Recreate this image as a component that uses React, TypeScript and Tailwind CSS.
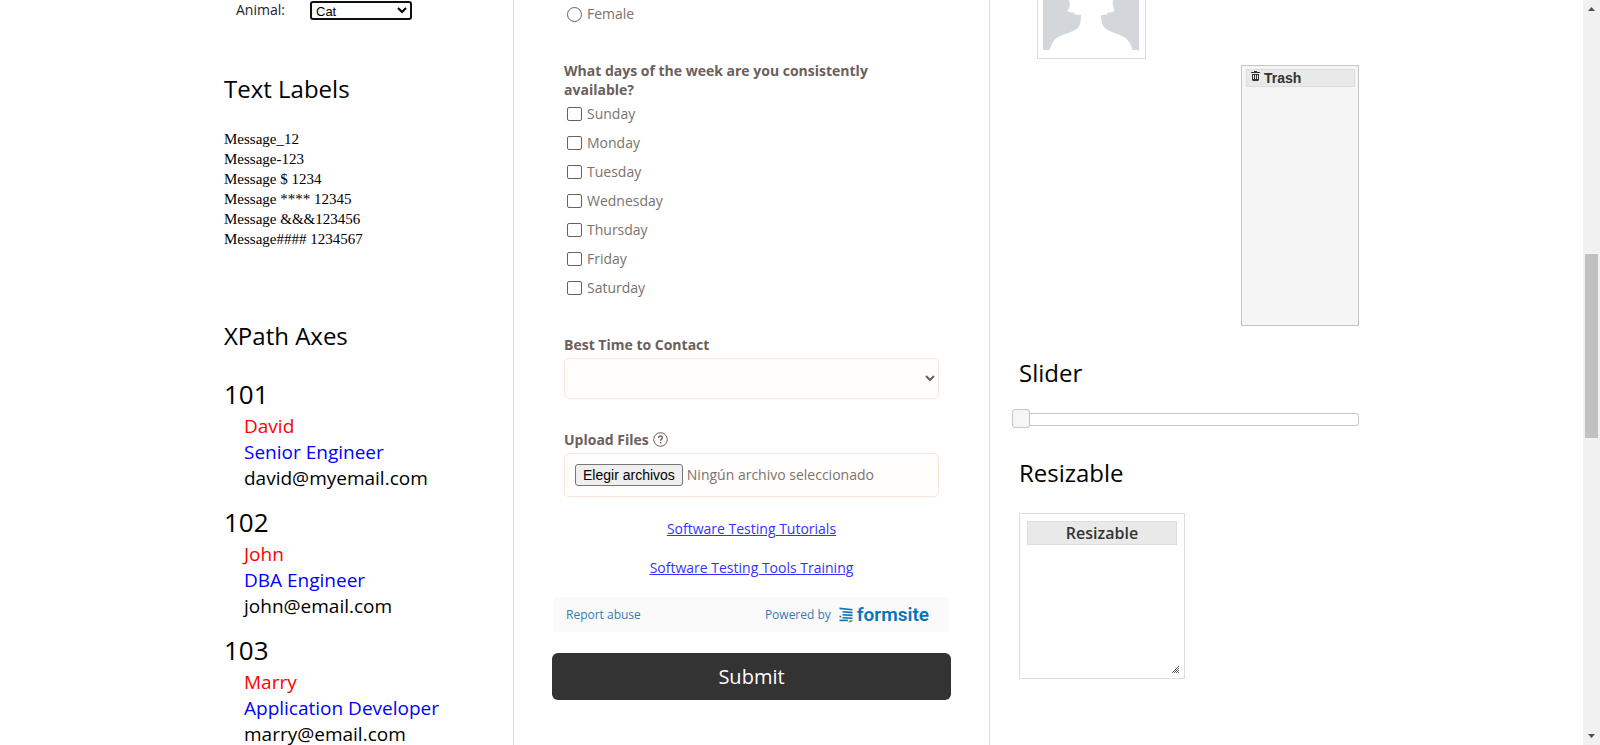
import React from "react";

const days = ["Sunday", "Monday", "Tuesday", "Wednesday", "Thursday", "Friday", "Saturday"];

const messages = [
  "Message_12",
  "Message-123",
  "Message $ 1234",
  "Message **** 12345",
  "Message &&&123456",
  "Message#### 1234567",
];

const employees = [
  { id: "101", name: "David", role: "Senior Engineer", email: "david@myemail.com" },
  { id: "102", name: "John", role: "DBA Engineer", email: "john@email.com" },
  { id: "103", name: "Marry", role: "Application Developer", email: "marry@email.com" },
];

function Heading({ children }: { children: React.ReactNode }) {
  return <h2 className="text-2xl font-normal text-black">{children}</h2>;
}

function LeftColumn() {
  return (
    <aside className="w-[289px] shrink-0 text-black">
      <div className="flex h-5 items-center pl-3 text-sm leading-5">
        <label htmlFor="animal" className="w-[74px] text-[#222]">
          Animal:
        </label>
        <select
          id="animal"
          className="h-[19px] w-[102px] rounded-[3px] border-2 border-[#101010] bg-white pb-px font-['Liberation_Sans',sans-serif] text-[13px] leading-[14px] text-black"
        >
          <option>Cat</option>
          <option>Dog</option>
        </select>
      </div>

      <div className="mt-[53px]">
        <Heading>Text Labels</Heading>
      </div>
      <div className="mt-6 font-['Liberation_Serif',serif] text-[15px] leading-5">
        {messages.map((m) => (
          <p key={m}>{m}</p>
        ))}
      </div>

      <div className="mt-[71px]">
        <Heading>XPath Axes</Heading>
      </div>
      <div className="mt-[25px] flex flex-col gap-[14px]">
        {employees.map((e) => (
          <div key={e.id} className="flex flex-col gap-[2px]">
            <h3 className="text-[26px] leading-[34px]">{e.id}</h3>
            <div className="pl-5 text-[19px] leading-[26px]">
              <p className="text-[#f00]">{e.name}</p>
              <p className="text-[#00f]">{e.role}</p>
              <p>{e.email}</p>
            </div>
          </div>
        ))}
      </div>
    </aside>
  );
}

function FormsiteLogo() {
  return (
    <span className="flex items-center gap-1">
      <svg width="14" height="16" viewBox="0 0 14 16" aria-hidden="true">
        <g stroke="#0a72b9" strokeWidth="1.6" fill="none">
          <path d="M0.5 1.4 L13.5 2.8" />
          <path d="M3.5 4.8 L13.5 5.6" />
          <path d="M3.5 7.8 L13.5 8.4" />
          <path d="M3.5 10.8 L13.5 11.2" />
          <path d="M0.5 13.4 H9" />
          <path d="M0.5 9.6 H2.2" />
        </g>
        <path d="M10 13.4 L13.600 13 L13 15 L9.6 15.4 Z" fill="#4fae5b" />
      </svg>
      <span className="font-['Roboto',sans-serif] text-[19px] leading-5 font-semibold text-[#0a72b9]">formsite</span>
    </span>
  );
}

function FormColumn() {
  return (
    <main className="min-w-0 flex-1 border-x border-[#ddd] px-[38px] text-sm text-[#7b726c]">
      <form onSubmit={(e) => e.preventDefault()}>
        <div className="px-3">
          <label className="flex h-7 items-center gap-[5px] pl-[3px]">
            <input
              type="radio"
              name="gender"
              className="size-[15px] appearance-none rounded-full border border-[#6b605a] checked:bg-[#6b605a]"
            />
            Female
          </label>

          <fieldset className="mt-[33px]">
            <legend className="leading-[19px] font-bold text-[#6b605a]">
              What days of the week are you consistently available?
            </legend>
            {days.map((day) => (
              <label key={day} className="flex h-[29px] items-center gap-[5px] pl-[3px]">
                <input
                  type="checkbox"
                  className="h-[14px] w-[15px] appearance-none rounded-[2px] border border-[#6b605a] checked:bg-[#6b605a]"
                />
                {day}
              </label>
            ))}
          </fieldset>

          <label htmlFor="contact-time" className="mt-[33px] block leading-[19px] font-bold text-[#6b605a]">
            Best Time to Contact
          </label>
          <select
            id="contact-time"
            className="mt-1 block h-[41px] w-full rounded-[5px] border border-[#f9e6da] bg-[#fffefc] text-[#6b605a]"
          >
            <option></option>
            <option>Morning</option>
            <option>Afternoon</option>
          </select>

          <div className="mt-[31px] flex items-center gap-1 leading-[19px] font-bold text-[#6b605a]">
            <span id="upload-label">Upload Files</span>
            <svg width="15" height="15" viewBox="0 0 15 15" fill="none" stroke="#6b605a" aria-hidden="true">
              <circle cx="7.5" cy="7.5" r="6.8" strokeWidth="1" />
              <path d="M5.6 5.9 C5.6 3.4 9.5 3.5 9.4 5.8 C9.3 7.2 7.5 7.1 7.5 8.8" strokeWidth="1.4" />
              <path d="M7.5 10 V11.4" strokeWidth="1.5" />
            </svg>
          </div>
          <div className="mt-1 flex h-11 items-center gap-1 rounded-[5px] border border-[#f9e6da] bg-[#fffefc] px-[10px]">
            <input id="files" type="file" multiple className="sr-only" aria-labelledby="upload-label" />
            <label
              htmlFor="files"
              className="rounded-[3px] border border-[#767676] bg-[#efefef] px-[7px] font-['Liberation_Sans',sans-serif] leading-5 text-black"
            >
              Elegir archivos
            </label>
            <span>Ningún archivo seleccionado</span>
          </div>

          <div className="mt-[22px] flex flex-col items-center gap-5 leading-[19px] text-[#3333ff] underline">
            <a href="#tutorials">Software Testing Tutorials</a>
            <a href="#training">Software Testing Tools Training</a>
          </div>
        </div>

        <div className="mx-[2px] mt-5 flex h-[35px] items-center justify-between bg-[#fafafa] pr-5 pl-3 text-xs text-[#337ab7]">
          <a href="#report">Report abuse</a>
          <a href="#formsite" className="flex items-center gap-2">
            Powered by
            <FormsiteLogo />
          </a>
        </div>

        <button type="submit" className="mt-[21px] h-[47px] w-full rounded-md bg-[#333] text-xl text-white">
          Submit
        </button>
      </form>
    </main>
  );
}

function Avatar() {
  return (
    <div className="ml-[18px] flex h-[59px] w-[109px] border border-t-0 border-[#ddd] bg-white pl-[5px]">
      <svg width="96" height="50" viewBox="0 0 96 50" fill="#d3d6db" role="img" aria-label="Profile picture">
        <path d="M0 0 H26 C26.500 3 27.500 5 26.500 7 L24.500 10.500 L26 12 L32 13 L31.500 14.500 L38 15 C38 21 37.500 26 33.500 29 C28 33 19 34 13.500 38 C10 41 8 45 6.500 50 H0 Z" />
        <path d="M96 0 H70 C69.500 3 69.500 5 70.500 7 L71.500 10.500 L70 12 L64 13 L64.500 14.500 L58 15 C58 21 59 26 63 29 C69 33 77 34 82.500 38 C86 41 88.500 45 89.500 50 H96 Z" />
      </svg>
    </div>
  );
}

function TrashIcon() {
  return (
    <svg className="mt-px self-start" width="9" height="10" viewBox="0 0 9 10" fill="#333" aria-hidden="true">
      <path d="M3 0 H6 V1 H9 V2 H0 V1 H3 Z" />
      <path
        fillRule="evenodd"
        d="M1 3 H8 V9 L7 10 H2 L1 9 Z M2 4 V8 H3 V4 Z M4 4 V8 H5 V4 Z M6 4 V8 H7 V4 Z"
      />
    </svg>
  );
}

function Grip() {
  return (
    <svg width="7" height="7" viewBox="0 0 7 7" stroke="#222" strokeWidth="0.7" aria-hidden="true">
      <path d="M0 7 L7 0 M2 7 L7 2 M4 7 L7 4 M6 7 L7 6" />
    </svg>
  );
}

function RightColumn() {
  return (
    <aside className="w-[369px] shrink-0 pl-[29px]">
      <Avatar />

      <section className="mt-[6px] ml-auto h-[261px] w-[118px] border border-[#c5c5c5] bg-[#f5f5f5] p-1 pt-[3px] pr-[3px]">
        <h4 className="flex h-[18px] items-center gap-1 border border-[#ddd] bg-[#e9e9e9] pl-1 font-['Liberation_Sans',sans-serif] text-sm leading-4 font-bold text-[#333]">
          <TrashIcon />
          Trash
        </h4>
      </section>

      <div className="mt-[31px]">
        <Heading>Slider</Heading>
      </div>
      <div className="mt-5 -ml-[7px] flex h-5 items-center">
        <input
          type="range"
          min={0}
          max={100}
          defaultValue={0}
          aria-label="Slider"
          className="h-[19px] w-full appearance-none bg-transparent [&::-webkit-slider-runnable-track]:h-[13px] [&::-webkit-slider-runnable-track]:rounded-[3px] [&::-webkit-slider-runnable-track]:border [&::-webkit-slider-runnable-track]:border-[#c5c5c5] [&::-webkit-slider-runnable-track]:bg-white [&::-webkit-slider-thumb]:-mt-[5px] [&::-webkit-slider-thumb]:-ml-px [&::-webkit-slider-thumb]:h-[19px] [&::-webkit-slider-thumb]:w-[18px] [&::-webkit-slider-thumb]:appearance-none [&::-webkit-slider-thumb]:rounded-[3px] [&::-webkit-slider-thumb]:border [&::-webkit-slider-thumb]:border-[#c5c5c5] [&::-webkit-slider-thumb]:bg-[#f6f6f6]"
        />
      </div>

      <div className="mt-7">
        <Heading>Resizable</Heading>
      </div>
      <section className="mt-6 flex size-[166px] flex-col justify-between border border-[#ddd] bg-white p-[7px]">
        <h3 className="h-6 border border-[#ddd] bg-[#e9e9e9] text-center text-base leading-[22px] font-semibold text-[#333]">
          Resizable
        </h3>
        <span className="-mr-[2px] -mb-[2px] self-end">
          <Grip />
        </span>
      </section>
    </aside>
  );
}

function Scrollbar() {
  return (
    <div className="flex h-full w-[17px] shrink-0 flex-col items-center bg-[#f1f1f1]" aria-hidden="true">
      <svg width="17" height="17" viewBox="0 0 17 17" fill="#505050">
        <path d="M5 11 L8.500 7 L12 11 Z" />
      </svg>
      <div className="basis-[237px]" />
      <div className="w-[13px] basis-[184px] bg-[#c1c1c1]" />
      <div className="flex-1" />
      <svg width="17" height="17" viewBox="0 0 17 17" fill="#505050">
        <path d="M5 6 L8.500 10 L12 6 Z" />
      </svg>
    </div>
  );
}

export default function App() {
  return (
    <div className="flex h-screen overflow-hidden bg-white font-['Open_Sans',sans-serif]">
      <div className="flex min-w-0 flex-1 justify-center overflow-hidden">
        <div className="flex w-full max-w-[1135px]">
          <LeftColumn />
          <FormColumn />
          <RightColumn />
        </div>
      </div>
      <Scrollbar />
    </div>
  );
}
